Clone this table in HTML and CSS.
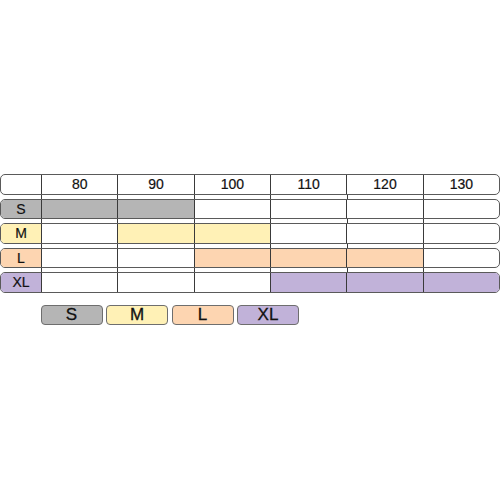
FILE: index.html
```html
<!DOCTYPE html>
<html>
<head>
<meta charset="utf-8">
<link rel="stylesheet" href="styles.css">
</head>
<body>
<div class="page">
  <div class="chart">
    <div class="row">
      <div class="cell label"></div>
      <div class="cell">80</div><div class="cell">90</div><div class="cell">100</div>
      <div class="cell">110</div><div class="cell">120</div><div class="cell">130</div>
    </div>
    <div class="row">
      <div class="cell label s">S</div>
      <div class="cell s"></div><div class="cell s"></div><div class="cell"></div>
      <div class="cell"></div><div class="cell"></div><div class="cell"></div>
    </div>
    <div class="row">
      <div class="cell label m">M</div>
      <div class="cell"></div><div class="cell m"></div><div class="cell m"></div>
      <div class="cell"></div><div class="cell"></div><div class="cell"></div>
    </div>
    <div class="row">
      <div class="cell label l">L</div>
      <div class="cell"></div><div class="cell"></div><div class="cell l"></div>
      <div class="cell l"></div><div class="cell l"></div><div class="cell"></div>
    </div>
    <div class="row">
      <div class="cell label xl">XL</div>
      <div class="cell"></div><div class="cell"></div><div class="cell"></div>
      <div class="cell xl"></div><div class="cell xl"></div><div class="cell xl"></div>
    </div>
  </div>
  <div class="legend">
    <div class="key s">S</div>
    <div class="key m">M</div>
    <div class="key l">L</div>
    <div class="key xl">XL</div>
  </div>
</div>
</body>
</html>
```
FILE: styles.css
```css
html, body {
  margin: 0;
  padding: 0;
  background: #fff;
}
body {
  font-family: "Liberation Sans", Arial, sans-serif;
  color: #111;
}
.page {
  width: 500px;
  height: 500px;
  padding-top: 174px;
  box-sizing: border-box;
}
.chart {
  display: flex;
  flex-direction: column;
  gap: 4px;
  background:
    linear-gradient(#3a3a3a, #3a3a3a) 41px 0 / 1px 100% no-repeat,
    linear-gradient(#3a3a3a, #3a3a3a) 117px 0 / 1px 100% no-repeat,
    linear-gradient(#3a3a3a, #3a3a3a) 194px 0 / 1px 100% no-repeat,
    linear-gradient(#3a3a3a, #3a3a3a) 270px 0 / 1px 100% no-repeat,
    linear-gradient(#3a3a3a, #3a3a3a) 347px 0 / 1px 100% no-repeat,
    linear-gradient(#3a3a3a, #3a3a3a) 423px 0 / 1px 100% no-repeat;
}
.row {
  display: grid;
  grid-template-columns: 40px repeat(6, 1fr);
  height: 20.5px;
  box-sizing: border-box;
  border: 1px solid #5a5a5a;
  border-radius: 5px;
  overflow: hidden;
  background: #fff;
}
.cell {
  display: flex;
  align-items: center;
  justify-content: center;
  border-left: 1px solid #3a3a3a;
  font-size: 14px;
  line-height: 1;
  -webkit-text-stroke: 0.2px #111;
}
.cell.label {
  border-left: none;
}
.s { background: #b5b5b5; }
.m { background: #fff1b6; }
.l { background: #fdd5b1; }
.xl { background: #c1b2d9; }
.legend {
  display: flex;
  gap: 3.5px;
  margin: 12px 0 0 40.5px;
}
.key {
  width: 62px;
  height: 20px;
  box-sizing: border-box;
  border: 1px solid #6e6e6e;
  border-radius: 4px;
  display: flex;
  align-items: center;
  justify-content: center;
  font-size: 17px;
  line-height: 1;
  -webkit-text-stroke: 0.3px #111;
}
```
